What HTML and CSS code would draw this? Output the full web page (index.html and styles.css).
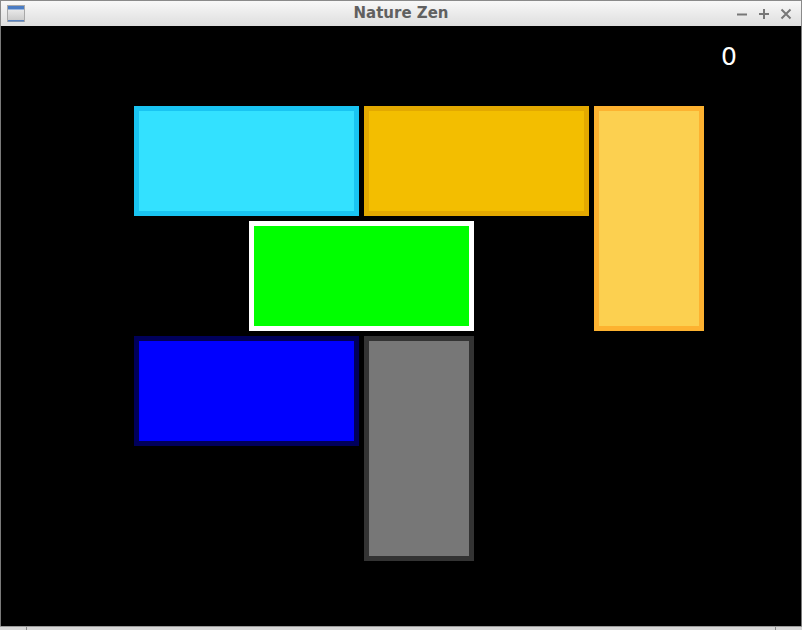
FILE: index.html
```html
<!DOCTYPE html>
<html>
<head>
<meta charset="utf-8">
<title>Nature Zen</title>
<link rel="stylesheet" href="styles.css">
</head>
<body>
<div class="window">
  <div class="titlebar">
    <svg class="app-icon" width="18" height="18" viewBox="0 0 18 18">
      <defs>
        <linearGradient id="body" x1="0" y1="0" x2="0" y2="1">
          <stop offset="0" stop-color="#f4f4f4"/>
          <stop offset="1" stop-color="#c8c8c8"/>
        </linearGradient>
      </defs>
      <rect x="0.5" y="0.5" width="17" height="16" fill="url(#body)" stroke="#a8a8a8"/>
      <rect x="1" y="1" width="16" height="3" fill="#4a7cc4"/>
      <rect x="1" y="4" width="16" height="1" fill="#9ab6de"/>
      <rect x="1" y="15" width="16" height="1.5" fill="#5b84c0"/>
    </svg>
    <div class="title">Nature Zen</div>
    <div class="controls">
      <svg width="12" height="12" viewBox="0 0 12 12"><path d="M1 6.5H11" stroke="#777" stroke-width="2"/></svg>
      <svg width="12" height="12" viewBox="0 0 12 12"><path d="M1 6H11M6 1V11" stroke="#777" stroke-width="2"/></svg>
      <svg width="12" height="12" viewBox="0 0 12 12"><path d="M1.5 1.5L10.5 10.5M10.5 1.5L1.5 10.5" stroke="#777" stroke-width="2"/></svg>
    </div>
  </div>
  <div class="canvas">
    <div class="score">0</div>
    <div class="board">
      <div class="block cyan" style="grid-column:1 / span 2;grid-row:1"></div>
      <div class="block gold" style="grid-column:3 / span 2;grid-row:1"></div>
      <div class="block yellow" style="grid-column:5;grid-row:1 / span 2"></div>
      <div class="block green" style="grid-column:2 / span 2;grid-row:2"></div>
      <div class="block blue" style="grid-column:1 / span 2;grid-row:3"></div>
      <div class="block gray" style="grid-column:3;grid-row:3 / span 2"></div>
    </div>
  </div>
  <div class="statusbar">
    <div class="seg seg-left"></div>
    <div class="seg seg-mid"></div>
    <div class="seg seg-right"></div>
  </div>
</div>
</body>
</html>
```

FILE: styles.css
```css
html, body {
  margin: 0;
  padding: 0;
  background: #000;
}
.window {
  width: 802px;
  height: 630px;
  display: flex;
  flex-direction: column;
  overflow: hidden;
  font-family: "DejaVu Sans", sans-serif;
}
.titlebar {
  position: relative;
  height: 26px;
  flex: none;
  box-sizing: border-box;
  border-top: 1px solid #8a8a8a;
  border-left: 1px solid #8a8a8a;
  border-right: 1px solid #8a8a8a;
  background: linear-gradient(#f8f8f8, #dedede);
  display: flex;
  align-items: center;
}
.app-icon {
  margin-left: 6px;
  margin-top: 1px;
}
.title {
  position: absolute;
  left: 0;
  right: 0;
  top: 3px;
  text-align: center;
  font-weight: bold;
  font-size: 15px;
  color: #606060;
  pointer-events: none;
}
.controls {
  margin-left: auto;
  margin-right: 9px;
  margin-top: 0px;
  display: flex;
  gap: 10px;
}
.canvas {
  position: relative;
  height: 600px;
  flex: none;
  background: #000;
  border-left: 1px solid #7a7a7a;
  border-right: 1px solid #7a7a7a;
}
.score {
  position: absolute;
  left: 720px;
  top: 16px;
  font-size: 25px;
  color: #fff;
  font-family: "DejaVu Sans", sans-serif;
}
.board {
  display: grid;
  grid-template-columns: repeat(5, 110px);
  grid-template-rows: repeat(4, 110px);
  gap: 5px;
  padding-left: 133px;
  padding-top: 80px;
}
.block {
  box-sizing: border-box;
  border: 5px solid;
}
.cyan { background: #33e1ff; border-color: #19c4f2; }
.gold { background: #f3be00; border-color: #e3a900; }
.yellow { background: #fcd050; border-color: #fdb230; }
.green { background: #00ff00; border-color: #ffffff; }
.blue { background: #0000ff; border-color: #00005a; }
.gray { background: #777777; border-color: #333333; }
.statusbar {
  flex: 1;
  display: flex;
  background: #d8d8d8;
  border-top: 1px solid #9a9a9a;
  box-sizing: border-box;
}
.seg {
  height: 100%;
  border-bottom: 1px solid #8a8a8a;
}
.seg-left { width: 26px; border-right: 1px solid #8a8a8a; }
.seg-mid { flex: 1; border-right: 1px solid #8a8a8a; }
.seg-right { width: 26px; }
```
